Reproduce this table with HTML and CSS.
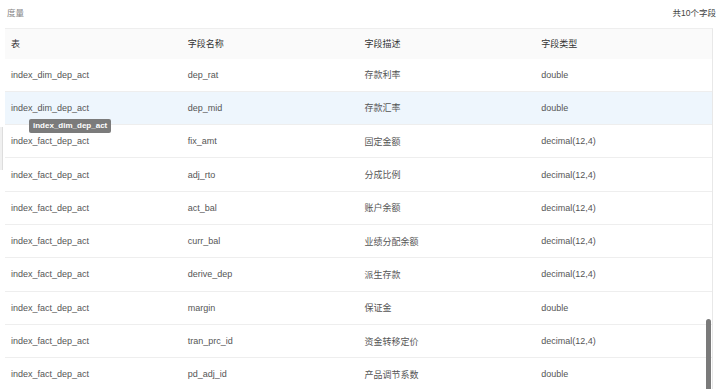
FILE: index.html
```html
<!DOCTYPE html>
<html lang="zh-CN">
<head>
  <meta charset="UTF-8" />
  <title>度量</title>
  <link rel="stylesheet" href="styles.css">
</head>
<body>
  <div class="side-tab"></div>

  <div class="panel">
    <div class="panel-head">
      <span class="panel-title">度量</span>
      <span class="panel-count">共10个字段</span>
    </div>

    <div class="table">
      <div class="row head">
        <div class="cell">表</div>
        <div class="cell">字段名称</div>
        <div class="cell">字段描述</div>
        <div class="cell">字段类型</div>
      </div>
      <div class="row">
        <div class="cell">index_dim_dep_act</div>
        <div class="cell">dep_rat</div>
        <div class="cell">存款利率</div>
        <div class="cell">double</div>
      </div>
      <div class="row hover">
        <div class="cell has-tip">index_dim_dep_act<span class="tip">index_dim_dep_act</span></div>
        <div class="cell">dep_mid</div>
        <div class="cell">存款汇率</div>
        <div class="cell">double</div>
      </div>
      <div class="row">
        <div class="cell">index_fact_dep_act</div>
        <div class="cell">fix_amt</div>
        <div class="cell">固定金额</div>
        <div class="cell">decimal(12,4)</div>
      </div>
      <div class="row">
        <div class="cell">index_fact_dep_act</div>
        <div class="cell">adj_rto</div>
        <div class="cell">分成比例</div>
        <div class="cell">decimal(12,4)</div>
      </div>
      <div class="row">
        <div class="cell">index_fact_dep_act</div>
        <div class="cell">act_bal</div>
        <div class="cell">账户余额</div>
        <div class="cell">decimal(12,4)</div>
      </div>
      <div class="row">
        <div class="cell">index_fact_dep_act</div>
        <div class="cell">curr_bal</div>
        <div class="cell">业绩分配余额</div>
        <div class="cell">decimal(12,4)</div>
      </div>
      <div class="row">
        <div class="cell">index_fact_dep_act</div>
        <div class="cell">derive_dep</div>
        <div class="cell">派生存款</div>
        <div class="cell">decimal(12,4)</div>
      </div>
      <div class="row">
        <div class="cell">index_fact_dep_act</div>
        <div class="cell">margin</div>
        <div class="cell">保证金</div>
        <div class="cell">double</div>
      </div>
      <div class="row">
        <div class="cell">index_fact_dep_act</div>
        <div class="cell">tran_prc_id</div>
        <div class="cell">资金转移定价</div>
        <div class="cell">decimal(12,4)</div>
      </div>
      <div class="row">
        <div class="cell">index_fact_dep_act</div>
        <div class="cell">pd_adj_id</div>
        <div class="cell">产品调节系数</div>
        <div class="cell">double</div>
      </div>
    </div>
  </div>

  <div class="scroll-thumb"></div>
</body>
</html>
```

FILE: styles.css
```css
* {
  box-sizing: border-box;
}

html, body {
  height: 100%;
}

body {
  margin: 0;
  overflow: hidden;
  font-family: "Liberation Sans", "Noto Sans CJK SC", sans-serif;
  font-size: 9px;
  color: #555;
  background: #fff;
  position: relative;
}

.side-tab {
  position: absolute;
  left: 0;
  top: 127px;
  width: 3px;
  height: 43px;
  background: #f0f0f0;
  border-right: 1px solid #ddd;
}

.panel {
  padding: 0 7px 0 5px;
}

.panel-head {
  display: flex;
  justify-content: space-between;
  align-items: center;
  height: 28px;
  padding: 0 0 4px 2px;
}

.panel-title {
  color: #888;
  font-size: 8.5px;
}

.panel-count {
  color: #444;
  font-size: 8.5px;
  margin-right: -3px;
}

.table {
  border-top: 1px solid #eee;
  border-right: 1px solid #e8e8e8;
}

.row {
  display: grid;
  grid-template-columns: repeat(4, 1fr);
  height: 33.3px;
  align-items: center;
  border-bottom: 1px solid #eee;
}

.row.head {
  height: 29.5px;
  background: #fafafa;
  border-bottom: none;
  color: #333;
}

.row.hover {
  background: #eef6fd;
}

.cell {
  padding-left: 6px;
  white-space: nowrap;
}

.has-tip {
  position: relative;
}

.tip {
  position: absolute;
  left: 24px;
  top: 16px;
  height: 14px;
  padding: 0 4px;
  line-height: 14px;
  background: #7b7b7b;
  color: #fff;
  font-size: 8px;
  font-weight: bold;
  border-radius: 2px;
  z-index: 5;
}

.scroll-thumb {
  position: absolute;
  right: 9px;
  top: 319px;
  width: 5px;
  height: 75px;
  background: #7a7a7a;
  border-radius: 3px;
}
```
